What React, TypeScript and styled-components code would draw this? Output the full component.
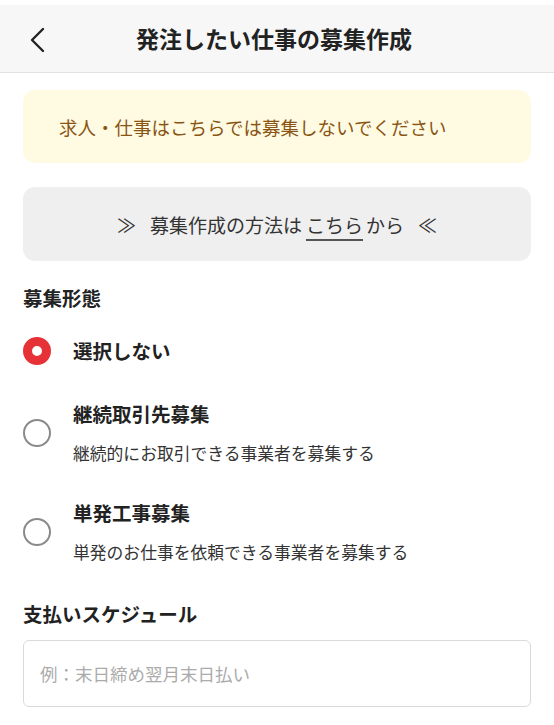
import { createGlobalStyle, styled } from 'styled-components';

const GlobalStyle = createGlobalStyle`
  body {
    margin: 0;
    background-color: #FFFFFF;
    font-family: "Noto Sans CJK JP", "Noto Sans", sans-serif;
    color: #222222;
  }
`;

const Header = styled.header`
  position: relative;
  display: flex;
  align-items: center;
  justify-content: center;
  height: 67px;
  margin-top: 5px;
  background-color: #F7F7F7;
  border-bottom: 1px solid #E2E2E2;

  .back {
    position: absolute;
    left: 25px;
    top: 22px;
    display: flex;
  }

  .title {
    margin: 0 0 2px -6px;
    font-size: 23px;
    font-weight: 700;
    color: #222222;
  }
`;

const Content = styled.main`
  display: flex;
  flex-direction: column;
  padding: 17px 23px 0;
`;

const Notice = styled.div`
  display: flex;
  align-items: center;
  height: 73px;
  padding-left: 36px;
  background-color: #FFFBE3;
  border-radius: 12px;
  color: #8A5514;
  font-size: 18.5px;
`;

const GuideBox = styled.div`
  display: flex;
  align-items: center;
  justify-content: center;
  height: 74px;
  margin-top: 24px;
  background-color: #EFEFEF;
  border-radius: 12px;
  color: #333333;
  font-size: 19px;

  .mark {
    margin: 0 14px;
  }

  a {
    margin: 0 3px 0 4px;
    color: #333333;
    text-decoration: underline;
    text-underline-offset: 6px;
    text-decoration-thickness: 1.5px;
    text-decoration-color: #555555;
  }
`;

const SectionTitle = styled.h2<{ $top: number }>`
  margin: ${({ $top }) => $top}px 0 0;
  font-size: 19.5px;
  font-weight: 700;
  color: #222222;
  line-height: 26px;
`;

const RadioList = styled.div`
  display: flex;
  flex-direction: column;
  gap: 36px;
  margin-top: 26px;
`;

const RadioRow = styled.label`
  display: flex;
  align-items: center;
  gap: 22px;
`;

const RadioCircle = styled.span<{ $checked: boolean }>`
  flex-shrink: 0;
  box-sizing: border-box;
  width: 28px;
  height: 28px;
  border-radius: 50%;
  border: ${({ $checked }) => ($checked ? '9px solid #E63236' : '2px solid #8A8A8A')};
  background-color: #FFFFFF;
`;

const RadioText = styled.div`
  display: flex;
  flex-direction: column;
  gap: 15px;

  .label {
    font-size: 19.5px;
    font-weight: 700;
    line-height: 26px;
    color: #222222;
  }

  .desc {
    font-size: 16.8px;
    line-height: 22px;
    color: #333333;
  }
`;

const Input = styled.input`
  box-sizing: border-box;
  width: 100%;
  height: 67px;
  margin-top: 13px;
  padding: 0 16px;
  border: 1px solid #DADADA;
  border-radius: 6px;
  font-family: inherit;
  font-size: 17.5px;
  color: #222222;
  outline: none;

  &::placeholder {
    color: #ABABAB;
  }
`;

interface OptionProps {
  label: string;
  desc?: string;
  checked?: boolean;
}

const Option = ({ label, desc, checked = false }: OptionProps) => (
  <RadioRow>
    <RadioCircle $checked={checked} />
    <RadioText>
      <span className="label">{label}</span>
      {desc && <span className="desc">{desc}</span>}
    </RadioText>
  </RadioRow>
);

const App = () => {
  return (
    <>
      <GlobalStyle />
      <Header>
        <span className="back">
          <svg width="22" height="26" viewBox="0 0 22 26" fill="none">
            <path d="M18 2 L7 13 L18 24" stroke="#222222" strokeWidth="2.4" strokeLinecap="round" strokeLinejoin="round" />
          </svg>
        </span>
        <h1 className="title">発注したい仕事の募集作成</h1>
      </Header>
      <Content>
        <Notice>求人・仕事はこちらでは募集しないでください</Notice>
        <GuideBox>
          <span className="mark">≫</span>
          募集作成の方法は<a href="#">こちら</a>から
          <span className="mark">≪</span>
        </GuideBox>
        <SectionTitle $top={24}>募集形態</SectionTitle>
        <RadioList>
          <Option label="選択しない" checked />
          <Option label="継続取引先募集" desc="継続的にお取引できる事業者を募集する" />
          <Option label="単発工事募集" desc="単発のお仕事を依頼できる事業者を募集する" />
        </RadioList>
        <SectionTitle $top={38}>支払いスケジュール</SectionTitle>
        <Input placeholder="例：末日締め翌月末日払い" />
      </Content>
    </>
  );
};

export default App;
